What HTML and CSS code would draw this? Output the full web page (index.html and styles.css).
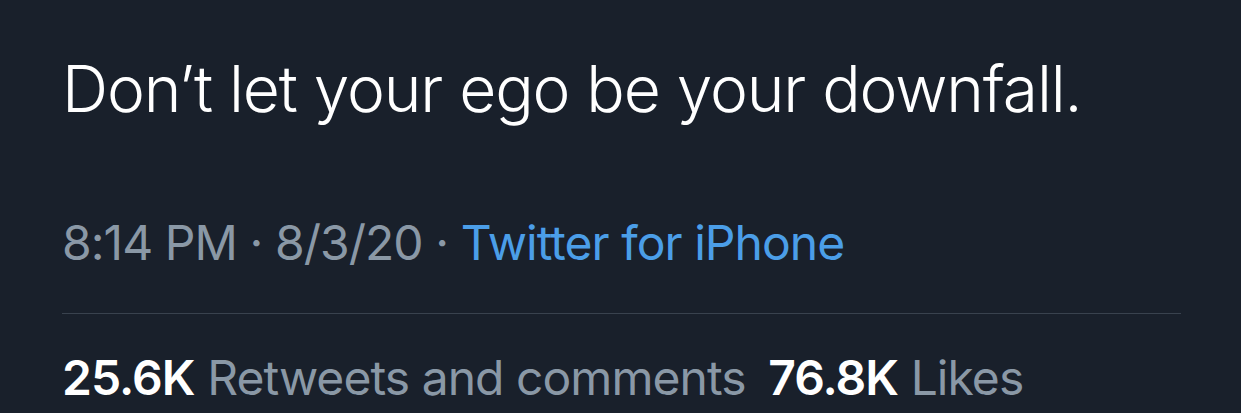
FILE: index.html
```html
<!DOCTYPE html>
<html>
<head>
<meta charset="utf-8">
<link rel="stylesheet" href="styles.css">
</head>
<body>
<main class="tweet">
  <p class="text">Don’t let your ego be your downfall.</p>
  <p class="meta">8:14 PM · 8/3/20 · <span class="source">Twitter for iPhone</span></p>
  <hr class="divider">
  <p class="stats"><b>25.6K</b> Retweets and comments <span class="gap"></span><b>76.8K</b> Likes</p>
</main>
</body>
</html>
```
FILE: styles.css
```css
html, body {
  margin: 0;
  padding: 0;
  background: #19202b;
  overflow: hidden;
}
.tweet {
  width: 1241px;
  height: 413px;
  box-sizing: border-box;
  padding: 0 60px 0 62px;
  font-family: Inter, "Noto Sans", sans-serif;
  display: flex;
  flex-direction: column;
}
.text {
  margin: 51px 0 0;
  font-size: 64px;
  line-height: 76px;
  color: #ffffff;
  font-weight: 350;
  letter-spacing: -1.1px;
}
.meta {
  margin: 88px 0 0;
  font-size: 48px;
  line-height: 56px;
  color: #8a98a6;
  letter-spacing: -0.95px;
}
.source {
  color: #4b9ee8;
}
.divider {
  margin: 42px 0 0;
  border: 0;
  height: 1px;
  background: #39424e;
}
.stats {
  margin: 36px 0 0;
  font-size: 48px;
  line-height: 56px;
  color: #8a98a6;
  letter-spacing: -0.95px;
  white-space: nowrap;
}
.stats b {
  color: #ffffff;
  font-weight: 600;
}
.gap {
  display: inline-block;
  width: 10px;
}
```
